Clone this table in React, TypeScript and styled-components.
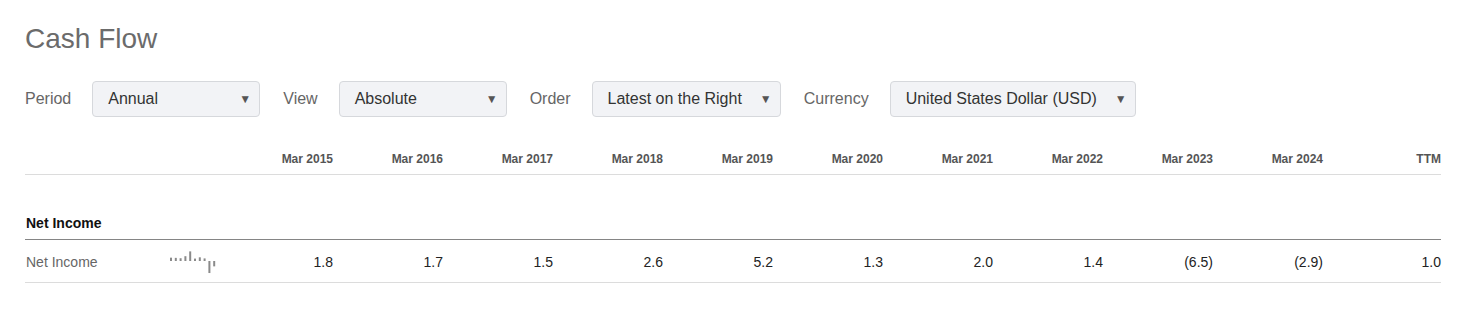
import styled, { createGlobalStyle } from "styled-components";

const GlobalStyle = createGlobalStyle`
  * {
    box-sizing: border-box;
  }

  body {
    margin: 0;
    background: #fff;
    font-family: "Liberation Sans", Arial, sans-serif;
  }
`;

const periods = [
  "Mar 2015",
  "Mar 2016",
  "Mar 2017",
  "Mar 2018",
  "Mar 2019",
  "Mar 2020",
  "Mar 2021",
  "Mar 2022",
  "Mar 2023",
  "Mar 2024",
  "TTM",
];

const netIncome = [1.8, 1.7, 1.5, 2.6, 5.2, 1.3, 2.0, 1.4, -6.5, -2.9, 1.0];

const filters = [
  { label: "Period", value: "Annual" },
  { label: "View", value: "Absolute" },
  { label: "Order", value: "Latest on the Right" },
  { label: "Currency", value: "United States Dollar (USD)" },
];

const formatValue = (v: number) =>
  v < 0 ? `(${Math.abs(v).toFixed(1)})` : v.toFixed(1);

function Sparkline({ values }: { values: number[] }) {
  const zero = 11;
  const scale = 1.85;
  return (
    <SparkSvg width="50" height="26" viewBox="0 0 50 26">
      {values.map((v, i) => {
        const h = Math.max(1, Math.abs(v) * scale);
        return (
          <rect
            key={i}
            x={i * 4.8}
            y={v >= 0 ? zero - h : zero}
            width="2"
            height={h}
            fill="#8a8a8a"
          />
        );
      })}
    </SparkSvg>
  );
}

function App() {
  return (
    <Page>
      <GlobalStyle />
      <Title>Cash Flow</Title>

      <Toolbar>
        {filters.map((f) => (
          <FilterGroup key={f.label}>
            <FilterLabel>{f.label}</FilterLabel>
            <SelectBox>
              <span>{f.value}</span>
              <Arrow>▼</Arrow>
            </SelectBox>
          </FilterGroup>
        ))}
      </Toolbar>

      <Table>
        <HeaderRow>
          <span />
          {periods.map((p) => (
            <HeaderCell key={p}>{p}</HeaderCell>
          ))}
        </HeaderRow>

        <SectionRow>
          <SectionTitle>Net Income</SectionTitle>
        </SectionRow>

        <DataRow>
          <RowLabel>
            <RowName>Net Income</RowName>
            <Sparkline values={netIncome.slice(0, 10)} />
          </RowLabel>
          {netIncome.map((v, i) => (
            <ValueCell key={i}>{formatValue(v)}</ValueCell>
          ))}
        </DataRow>
      </Table>
    </Page>
  );
}

export default App;

const Page = styled.div`
  padding: 23px 23px 0 25px;
  width: 1464px;
`;

const Title = styled.h1`
  margin: 0;
  font-size: 28px;
  line-height: 32px;
  font-weight: 400;
  color: #6b6b6b;
`;

const Toolbar = styled.div`
  display: flex;
  align-items: center;
  gap: 23px;
  margin-top: 26px;
`;

const FilterGroup = styled.div`
  display: flex;
  align-items: center;
  gap: 21px;
`;

const FilterLabel = styled.span`
  font-size: 16px;
  color: #666;
`;

const SelectBox = styled.div`
  display: flex;
  align-items: center;
  justify-content: space-between;
  gap: 18px;
  min-width: 168px;
  height: 36px;
  padding: 0 8px 0 15px;
  background: #f2f3f6;
  border: 1px solid #d6d8dc;
  border-radius: 4px;
  font-size: 16px;
  color: #333;
`;

const Arrow = styled.span`
  font-size: 12px;
  color: #555;
  line-height: 1;
`;

const Table = styled.div`
  margin-top: 34px;
  width: 1416px;
`;

const rowGrid = `
  display: grid;
  grid-template-columns: 198px repeat(10, 110px) 1fr;
  align-items: start;
`;

const HeaderRow = styled.div`
  ${rowGrid}
  padding-bottom: 7px;
  border-bottom: 1px solid #dcdcdc;
`;

const HeaderCell = styled.span`
  text-align: right;
  font-size: 12px;
  line-height: 16px;
  font-weight: 700;
  color: #555;
`;

const SectionRow = styled.div`
  padding: 39px 0 7px 1px;
  border-bottom: 1px solid #858585;
`;

const SectionTitle = styled.span`
  display: block;
  font-size: 14px;
  line-height: 18px;
  font-weight: 700;
  color: #111;
`;

const DataRow = styled.div`
  ${rowGrid}
  padding: 13px 0 11px;
  border-bottom: 1px solid #dcdcdc;
`;

const RowLabel = styled.div`
  display: flex;
  align-items: flex-start;
  height: 18px;
`;

const RowName = styled.span`
  width: 145px;
  padding-left: 1px;
  font-size: 14px;
  line-height: 18px;
  color: #666;
`;

const SparkSvg = styled.svg`
  display: block;
  flex-shrink: 0;
  margin-top: -3px;
  overflow: visible;
`;

const ValueCell = styled.span`
  text-align: right;
  font-size: 14px;
  line-height: 18px;
  color: #222;
`;
